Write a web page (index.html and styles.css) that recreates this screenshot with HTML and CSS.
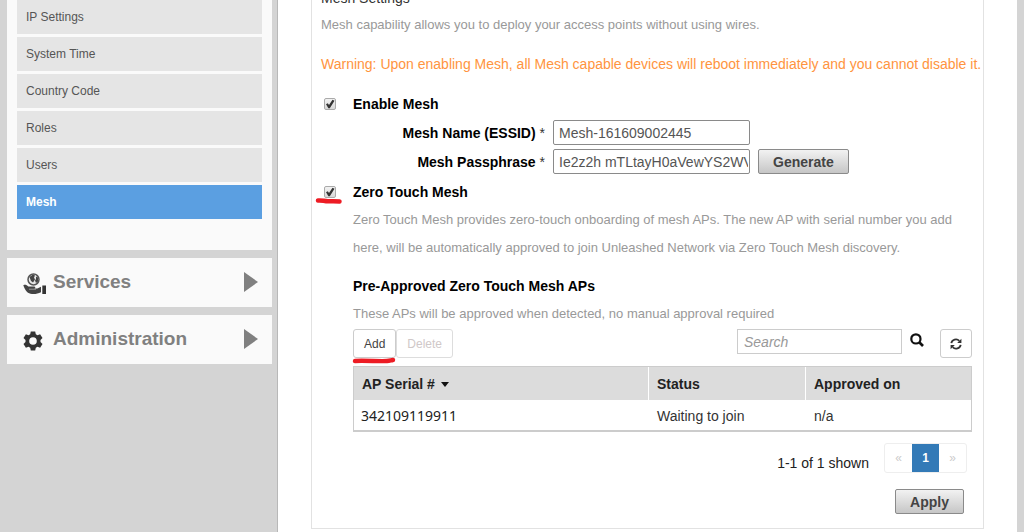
FILE: index.html
```html
<!DOCTYPE html>
<html lang="en">
<head>
<meta charset="utf-8">
<title>Mesh Settings</title>
<link rel="stylesheet" href="styles.css">
</head>
<body>
<div class="app">
  <aside class="sidebar">
    <nav class="subnav">
      <a href="#">IP Settings</a>
      <a href="#">System Time</a>
      <a href="#">Country Code</a>
      <a href="#">Roles</a>
      <a href="#">Users</a>
      <a href="#" class="active">Mesh</a>
    </nav>
    <a href="#" class="section">
      <svg class="section-icon" viewBox="0 0 24 24" width="24" height="24">
        <circle cx="10.500" cy="7.500" r="5.500" fill="#e8e8e8" stroke="#555" stroke-width="1.500"/>
        <path d="M6.500 5l3.500-2.500 2 1-1 2 1 2-2 3-2-1.500zM13 4.500l2 1v4l-2 1.500-1-2.500 1-1.500z" fill="#444"/>
        <path d="M.3 13.200c2-.9 3.400-.2 5 1.300h5.700c1.800 0 1.800 1.700.3 2h3l3.700-1.800v5.600c-3 1.500-6 2-9 1.700-4-.3-6.700-3-8.700-8.800z" fill="#444"/>
        <path d="M19.300 13.500h3.700v8.500h-3.700z" fill="#333"/>
        <path d="M6 17.200h7" stroke="#bbb" stroke-width=".7"/>
      </svg>
      <span>Services</span>
      <i class="arrow"></i>
    </a>
    <a href="#" class="section">
      <svg class="section-icon" viewBox="0 0 24 24" width="24" height="24">
        <path fill="#333" fill-rule="evenodd" d="M7.800 2.500h4.400l.6 2.700 1.700 1 2.600-1 2.400 3.800-2 1.900v2.200l2 1.900-2.400 3.800-2.600-1-1.700 1-.6 2.700H7.800l-.6-2.700-1.700-1-2.600 1L.5 15l2-1.900v-2.200L.5 9l2.400-3.800 2.600 1 1.700-1zM10 8.200a3.800 3.800 0 100 7.600 3.800 3.800 0 000-7.600z"/>
      </svg>
      <span>Administration</span>
      <i class="arrow"></i>
    </a>
  </aside>

  <main class="main">
    <form class="card">
      <h1 class="title">Mesh Settings</h1>
      <p class="hint">Mesh capability allows you to deploy your access points without using wires.</p>
      <p class="warning">Warning: Upon enabling Mesh, all Mesh capable devices will reboot immediately and you cannot disable it.</p>

      <div class="option">
        <input type="checkbox" id="enable" checked>
        <label for="enable">Enable Mesh</label>
      </div>
      <div class="indent">
        <div class="field">
          <label for="name">Mesh Name (ESSID) <span class="star">*</span></label>
          <input type="text" id="name" value="Mesh-161609002445">
        </div>
        <div class="field">
          <label for="pass">Mesh Passphrase <span class="star">*</span></label>
          <input type="text" id="pass" value="Ie2z2h mTLtayH0aVewYS2WVkq">
          <button type="button" class="btn">Generate</button>
        </div>
      </div>

      <div class="option zero">
        <input type="checkbox" id="zero" checked>
        <label for="zero">Zero Touch Mesh</label>
        <svg class="mark mark-check" viewBox="0 0 28 8" width="28" height="8"><path d="M3 3.500c4-.5 6 .8 10 .8s8-.2 11.500.2" fill="none" stroke="#ed1c24" stroke-width="4.500" stroke-linecap="round"/></svg>
      </div>
      <div class="indent">
        <p class="about">Zero Touch Mesh provides zero-touch onboarding of mesh APs. The new AP with serial number you add here, will be automatically approved to join Unleashed Network via Zero Touch Mesh discovery.</p>
        <h2 class="subtitle">Pre-Approved Zero Touch Mesh APs</h2>
        <p class="note">These APs will be approved when detected, no manual approval required</p>

        <div class="toolbar">
          <div class="add-wrap">
            <button type="button" class="tool">Add</button>
            <svg class="mark mark-add" viewBox="0 0 44 7" width="44" height="7"><path d="M3 4c8-.5 28 .5 32 0 3-.2 4-.8 6-1" fill="none" stroke="#ed1c24" stroke-width="4.500" stroke-linecap="round"/></svg>
          </div>
          <button type="button" class="tool" disabled>Delete</button>
          <input type="text" class="search" placeholder="Search" aria-label="Search">
          <button type="button" class="find" aria-label="Find">
            <svg viewBox="0 0 14 14" width="14" height="14"><circle cx="5.900" cy="5.900" r="4.600" fill="none" stroke="#111" stroke-width="2.200"/><path d="M9 9l4 4" stroke="#111" stroke-width="2.600"/></svg>
          </button>
          <button type="button" class="tool refresh" aria-label="Refresh">
            <svg viewBox="0 0 12 12" width="12" height="12"><path d="M1.300 5.200A4.700 4.700 0 019.300 2.800M10.700 6.800A4.700 4.700 0 012.700 9.200" fill="none" stroke="#333" stroke-width="1.800"/><path d="M11.400.8v4.200H7.200zM.6 11.200V7h4.200z" fill="#333"/></svg>
          </button>
        </div>

        <table class="grid">
          <colgroup><col class="c-serial"><col class="c-status"><col></colgroup>
          <thead><tr><th>AP Serial # <i class="caret"></i></th><th>Status</th><th>Approved on</th></tr></thead>
          <tbody><tr><td class="serial">342109119911</td><td>Waiting to join</td><td>n/a</td></tr></tbody>
        </table>

        <div class="pager">
          <span>1-1 of 1 shown</span>
          <div class="pages">
            <a href="#">«</a><a href="#" class="current">1</a><a href="#">»</a>
          </div>
        </div>
        <div class="actions"><button type="button" class="btn">Apply</button></div>
      </div>
    </form>
  </main>
</div>
</body>
</html>
```
FILE: styles.css
```css
* { box-sizing: border-box; }
body {
  margin: 0;
  height: 100vh;
  overflow: hidden;
  background: #d4d4d4;
  font: 14px/16px "Liberation Sans", Arial, sans-serif;
  color: #000;
}
h1, h2, p { margin: 0; }
a { text-decoration: none; }
button, input { font-family: inherit; margin: 0; }

.app { display: flex; height: 100%; padding: 0 7px; }

.sidebar {
  flex: 0 0 265px;
  display: flex;
  flex-direction: column;
  gap: 8px;
  margin-right: 5px;
}
.subnav {
  display: flex;
  flex-direction: column;
  gap: 3px;
  padding: 0 10px 31px 10px;
  background: #fafafa;
}
.subnav a {
  height: 34px;
  padding: 0 9px;
  line-height: 34px;
  font-size: 12px;
  color: #555;
  background: #e5e5e5;
}
.subnav a.active { background: #5b9fe1; color: #fff; font-weight: bold; }

.section {
  display: flex;
  align-items: center;
  height: 49px;
  padding: 0 14px 2px 16px;
  background: #fafafa;
  color: #808080;
  font-size: 19px;
  line-height: 24px;
  font-weight: bold;
}
.section-icon { margin: 4px 6px 0 0; }
.section span { flex: 1; }
.arrow {
  border-left: 14px solid #808080;
  border-top: 10px solid transparent;
  border-bottom: 10px solid transparent;
}

.main {
  flex: 1;
  min-width: 0;
  padding: 0 33px;
  background: #fff;
  border-left: 1px solid #b8b8b8;
}
.card {
  margin-top: -21px;
  padding: 10px 11px 14px 9px;
  border: 1px solid #e2e2e2;
}
.title { font-size: 14px; line-height: 16px; font-weight: normal; color: #333; }
.hint { margin-top: 11px; font-size: 13px; color: #999; }
.warning { margin-top: 23px; color: #ff9440; white-space: nowrap; }

.option { position: relative; display: flex; align-items: center; gap: 17px; padding-left: 3px; margin-top: 24px; }
.option label { font-weight: bold; }
input[type="checkbox"] {
  appearance: none;
  width: 12px;
  height: 12px;
  border: 1px solid #aaa;
  border-radius: 2px;
  background: linear-gradient(#f2f2f2, #d8d8d8);
}
input[type="checkbox"]:checked::before {
  content: "";
  display: block;
  width: 10px;
  height: 10px;
  background: #333;
  clip-path: polygon(10% 52%, 28% 42%, 40% 60%, 75% 8%, 95% 18%, 48% 92%, 34% 92%);
}
.indent { padding-left: 32px; }
.field { display: flex; align-items: center; gap: 8px; margin-top: 4px; }
.option + .indent .field:first-child { margin-top: 8px; }
.field label { flex: 0 0 192px; text-align: right; font-weight: bold; }
.star { font-weight: normal; color: #333; }
.field input {
  width: 197px;
  height: 25px;
  padding: 0 1px 0 5px;
  border: 1px solid #8a8a8a;
  border-radius: 2px;
  font-size: 14px;
  color: #555;
}
.btn {
  height: 25px;
  padding: 0 14px;
  border: 1px solid #8a8a8a;
  border-radius: 2px;
  background: linear-gradient(#f2f2f2, #c6c6c6);
  color: #444;
  font-size: 14px;
  font-weight: bold;
}
.zero { margin-top: 10px; }
.mark { position: absolute; pointer-events: none; }
.mark-check { left: -6px; top: 13px; }
.about { margin-top: 6px; font-size: 13px; line-height: 28px; color: #999; }
.subtitle { margin-top: 16px; font-size: 14px; line-height: 16px; }
.note { margin-top: 12px; font-size: 13px; color: #999; }

.toolbar { display: flex; align-items: flex-start; margin-top: 7px; }
.add-wrap { position: relative; }
.mark-add { left: -1px; top: 28px; }
.tool {
  height: 29px;
  padding: 0 10px;
  border: 1px solid #ccc;
  border-radius: 3px;
  background: #fff;
  color: #444;
  font-size: 12px;
}
.tool:disabled { color: #d0c8c8; border-color: #ddd; }
.search {
  width: 165px;
  height: 25px;
  margin-left: auto;
  padding: 0 6px;
  border: 1px solid #ccc;
  font-size: 14px;
}
.search::placeholder { color: #999; font-style: italic; }
.find { display: flex; margin: 4px 16px 0 8px; padding: 0; border: 0; background: none; }
.refresh { display: flex; align-items: center; justify-content: center; width: 32px; padding: 0; }

.grid {
  width: 100%;
  margin-top: 8px;
  table-layout: fixed;
  border-collapse: separate;
  border-spacing: 0;
  border: 1px solid #ccc;
  border-bottom-width: 2px;
}
.c-serial { width: 295px; }
.c-status { width: 157px; }
.grid th, .grid td { padding: 0 8px; text-align: left; }
.grid th { height: 33px; background: #dcdcdc; color: #222; border-right: 1px solid #fff; }
.grid th:last-child { border-right: 0; }
.grid td { height: 30px; padding-top: 2px; color: #333; }
.grid .serial { padding-left: 7px; font: 14px/16px "Noto Sans", sans-serif; color: #222; }
.caret {
  display: inline-block;
  margin-left: 2px;
  vertical-align: middle;
  border-top: 5px solid #111;
  border-left: 4px solid transparent;
  border-right: 4px solid transparent;
}

.pager { display: flex; justify-content: flex-end; align-items: center; gap: 15px; margin: 11px 5px 0 0; color: #222; }
.pager > span { padding-top: 10px; }
.pages { display: flex; border: 1px solid #eee; border-radius: 3px; }
.pages a { width: 27px; height: 28px; line-height: 28px; text-align: center; font-size: 12px; color: #ccc; }
.pages .current { background: #337ab7; color: #fff; font-weight: bold; }
.actions { display: flex; justify-content: flex-end; margin: 16px 8px 0 0; }
```
